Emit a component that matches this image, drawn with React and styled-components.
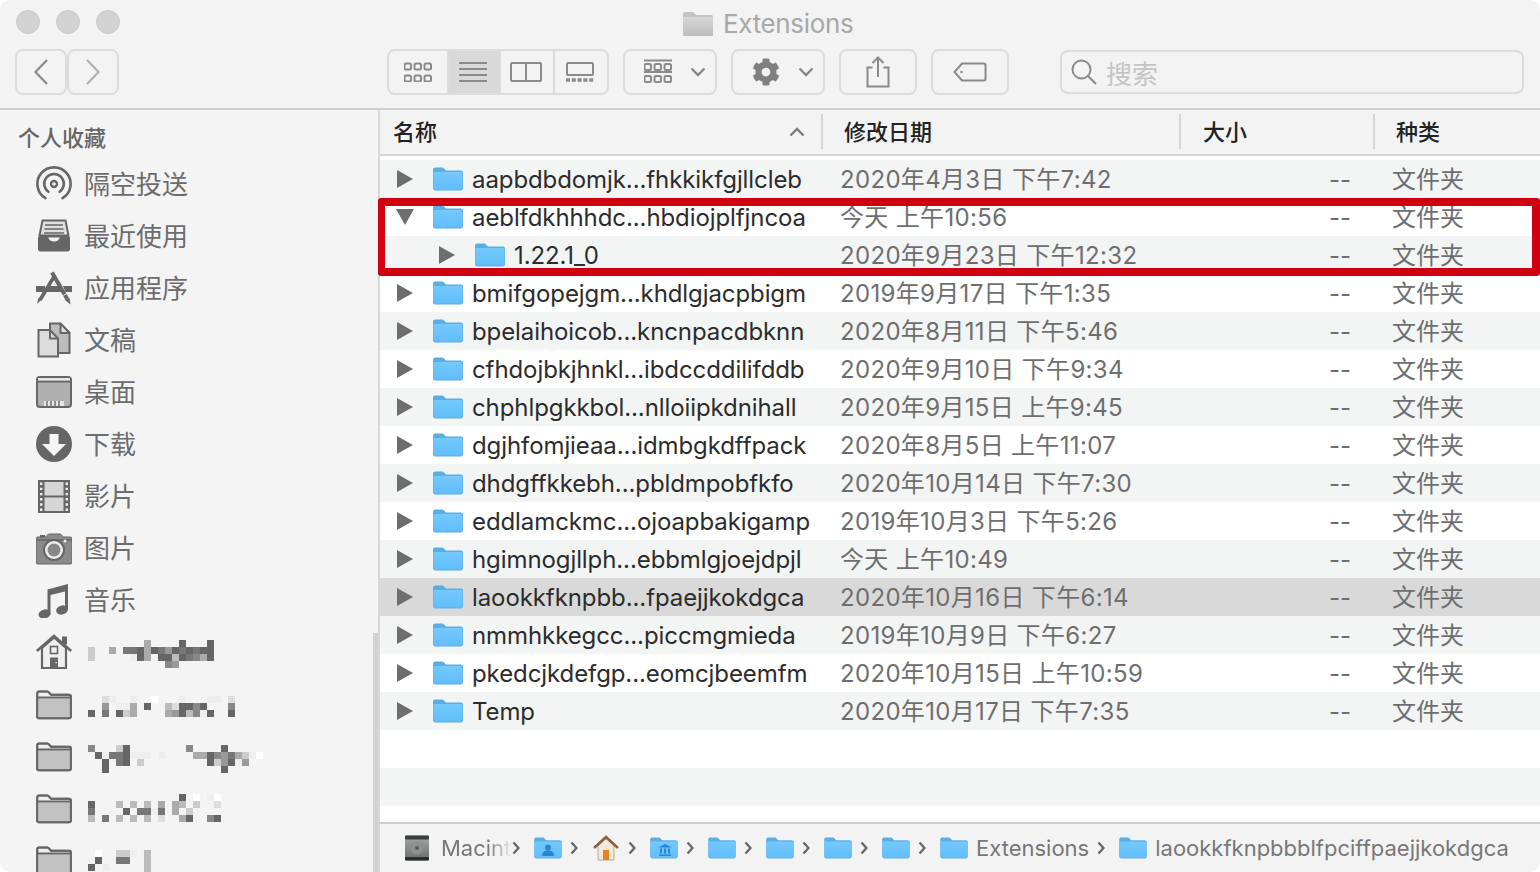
import styled, { createGlobalStyle } from "styled-components";
import { FaCog } from "react-icons/fa";

const GlobalStyle = createGlobalStyle`
  html, body {
    margin: 0;
    padding: 0;
    background: #fff;
  }
  body {
    width: 1540px;
    height: 872px;
    overflow: hidden;
    font-family: Inter, "Noto Sans CJK SC", sans-serif;
  }
`;

const rows = [
  { name: "aapbdbdomjk...fhkkikfgjllcleb", date: "2020年4月3日 下午7:42" },
  { name: "aeblfdkhhhdc...hbdiojplfjncoa", date: "今天 上午10:56", open: true },
  { name: "1.22.1_0", date: "2020年9月23日 下午12:32", level: 1 },
  { name: "bmifgopejgm...khdlgjacpbigm", date: "2019年9月17日 下午1:35" },
  { name: "bpelaihoicob...kncnpacdbknn", date: "2020年8月11日 下午5:46" },
  { name: "cfhdojbkjhnkl...ibdccddilifddb", date: "2020年9月10日 下午9:34" },
  { name: "chphlpgkkbol...nlloiipkdnihall", date: "2020年9月15日 上午9:45" },
  { name: "dgjhfomjieaa...idmbgkdffpack", date: "2020年8月5日 上午11:07" },
  { name: "dhdgffkkebh...pbldmpobfkfo", date: "2020年10月14日 下午7:30" },
  { name: "eddlamckmc...ojoapbakigamp", date: "2019年10月3日 下午5:26" },
  { name: "hgimnogjllph...ebbmlgjoejdpjl", date: "今天 上午10:49" },
  { name: "laookkfknpbb...fpaejjkokdgca", date: "2020年10月16日 下午6:14", selected: true },
  { name: "nmmhkkegcc...piccmgmieda", date: "2019年10月9日 下午6:27" },
  { name: "pkedcjkdefgp...eomcjbeemfm", date: "2020年10月15日 上午10:59" },
  { name: "Temp", date: "2020年10月17日 下午7:35" },
];

// pixelated names in the sidebar, one hex digit = grey level of a 7px cell
const mosaics = [
  {
    top: 14,
    cells: [
      "........a....6...6",
      "c..a.776a679676766",
      "c.....e6a.66b678a6",
      "...........89",
    ],
  },
  {
    top: 18,
    cells: [
      "..de..e..f...e...ee.d",
      "..9.eea.6..bd6686...8",
      "6.7.6ca....a96b8e6..6",
    ],
  },
  {
    top: 15,
    cells: [
      "8...c6........8....6",
      ".6e776eee.e....aa6897acef",
      "..6.76.c.........6c96e9",
      "..6................6",
    ],
  },
  {
    top: 12,
    cells: [
      ".............6.f.ef",
      "6...b.b.b.a.ab.c..d",
      "7....6.77e7.a.c",
      "b.7.b.b.b.d..a6..86",
    ],
  },
  {
    top: 16,
    cells: [".f..cce.b", ".6..77..b", "6.e.....b", "........b"],
  },
];

const Mosaic = ({ cells, top }) => (
  <MosaicSvg $top={top} width="180" height="28" viewBox="0 0 180 28">
    {cells.map((line, y) =>
      line.split("").map((c, x) =>
        c === "." ? null : (
          <rect
            key={x + "-" + y}
            x={x * 7}
            y={y * 7}
            width="7"
            height="7"
            fill={"#" + c + c + c + c + c + c}
          />
        )
      )
    )}
  </MosaicSvg>
);

const BlueFolder = ({ w = 30, h = 24 }) => (
  <svg width={w} height={h} viewBox="0 0 30 24">
    <defs>
      <linearGradient id="blueBody" x1="0" y1="0" x2="0" y2="1">
        <stop offset="0" stopColor="#74c9fd" />
        <stop offset="1" stopColor="#62bdfb" />
      </linearGradient>
    </defs>
    <path d="M0 2.500C0 1.200 1 .5 2 .5h7c1 0 1.500.4 2.200 1.200L13 3.500h15c1.200 0 2 .8 2 2V21c0 1.500-1 2.500-2.300 2.500H2.300C1 23.500 0 22.500 0 21z" fill="#5aaee6" />
    <path d="M.5 6.500C.5 5.600 1 5 1.800 5h26.400c.8 0 1.300.6 1.300 1.500V21c0 1-.6 1.600-1.500 1.600H2C1.100 22.600.5 22 .5 21z" fill="url(#blueBody)" />
  </svg>
);

const GreyFolder = () => (
  <svg width="30" height="24" viewBox="0 0 30 24">
    <defs>
      <linearGradient id="greyBody" x1="0" y1="0" x2="0" y2="1">
        <stop offset="0" stopColor="#d8d8d8" />
        <stop offset="1" stopColor="#bcbcbc" />
      </linearGradient>
    </defs>
    <path d="M0 1.500C0 .8.6 0 1.500 0h8c.8 0 1.300.4 1.800 1L13 3h15.500c.8 0 1.500.7 1.500 1.500v18c0 .8-.7 1.500-1.500 1.500h-27C.7 24 0 23.300 0 22.500z" fill="#c4c4c4" />
    <rect x="0" y="5" width="30" height="19" rx="1" fill="url(#greyBody)" />
  </svg>
);

const SideFolder = () => (
  <svg width="36" height="36" viewBox="0 0 36 36">
    <path d="M1.200 7.500c0-1.400.8-2 2-2h8c1 0 1.500.4 2.200 1.300L15 8.700h18c1.200 0 1.800.7 1.800 1.800v20c0 1.200-.7 1.800-1.800 1.800H3c-1.200 0-1.800-.7-1.800-1.800z" fill="#efefef" stroke="#666" strokeWidth="2" />
    <path d="M2.200 12.400h31.600v18.900H2.200z" fill="#c2c2c2" />
    <path d="M1.500 11.500h33" stroke="#666" strokeWidth="1.800" />
    <path d="M1.200 7.500c0-1.400.8-2 2-2h8c1 0 1.500.4 2.200 1.300L15 8.700h18c1.200 0 1.800.7 1.800 1.800v20c0 1.200-.7 1.800-1.800 1.800H3c-1.200 0-1.800-.7-1.800-1.800z" fill="none" stroke="#666" strokeWidth="2" />
  </svg>
);

const sideIcons = {
  airdrop: (
    <svg width="36" height="36" viewBox="0 0 36 36" fill="none" stroke="#666" strokeWidth="2.600" strokeLinecap="round">
      <path d="M9.500 32.200A16.600 16.600 0 1 1 26.500 32.200" />
      <path d="M12.400 25.800A9.800 9.800 0 1 1 23.600 25.800" />
      <circle cx="18" cy="18" r="3" strokeWidth="2.400" />
    </svg>
  ),
  recents: (
    <svg width="36" height="36" viewBox="0 0 36 36">
      <path d="M6.500 2.500h23l3 15H3.500z" fill="#e0e0e0" stroke="#666" strokeWidth="2" />
      <path d="M9 7h18M8.500 11h19M8 15h20" stroke="#666" strokeWidth="1.600" />
      <path d="M2 19h10c1 3 3 4.500 6 4.500s5-1.500 6-4.500h10v12c0 1.400-1 2.400-2.400 2.400H4.400C3 33.400 2 32.400 2 31z" fill="#666" />
      <path d="M3 18h30v1.500H3z" fill="#666" />
    </svg>
  ),
  apps: (
    <svg width="36" height="36" viewBox="0 0 36 36">
      <path d="M0 16h9v2.500l-2 3.500H0zM13 16h10l3 6H10zM27 16h9v6h-6.500z" fill="#666" />
      <path d="M17.500 7.500L4 30" stroke="#666" strokeWidth="3.600" />
      <path d="M5.800 29.200L1 34l1.400-6z" fill="#666" />
      <path d="M16 2.500l15 26" stroke="#666" strokeWidth="4" />
      <path d="M28.500 29.500l6 5-1-6.800z" fill="#666" />
      <path d="M27.500 25.500l3.400-2" stroke="#f4f4f4" strokeWidth="1" />
    </svg>
  ),
  docs: (
    <svg width="36" height="36" viewBox="0 0 36 36">
      <path d="M14 1.500h10.500L33.500 11v20H14z" fill="#bdbdbd" stroke="#666" strokeWidth="2" />
      <path d="M24.500 1.500V11h9z" fill="#e4e4e4" stroke="#666" strokeWidth="2" strokeLinejoin="round" />
      <path d="M2.500 8h11.500l8 8.500v18H2.500z" fill="#dcdcdc" stroke="#666" strokeWidth="2" />
      <path d="M14 8v8.500h8" fill="none" stroke="#666" strokeWidth="2" />
    </svg>
  ),
  desktop: (
    <svg width="36" height="36" viewBox="0 0 36 36">
      <rect x="1" y="3" width="34" height="30" rx="3" fill="#b0b0b0" stroke="#666" strokeWidth="2" />
      <path d="M1 7.500h34" stroke="#666" strokeWidth="2" />
      <path d="M2 4h32v2.500H2z" fill="#e6e6e6" />
      <rect x="8" y="27" width="20" height="5" fill="#e6e6e6" />
      <path d="M11 27v5M15 27v5M19 27v5M23 27v5" stroke="#666" strokeWidth="1.400" />
    </svg>
  ),
  downloads: (
    <svg width="36" height="36" viewBox="0 0 36 36">
      <circle cx="18" cy="18" r="18" fill="#666" />
      <path d="M13.500 8h9v10H30L18 30 6 18h7.500z" fill="#f4f4f4" />
    </svg>
  ),
  movies: (
    <svg width="36" height="36" viewBox="0 0 36 36">
      <rect x="2" y="2" width="32" height="33" fill="#666" />
      <rect x="8.500" y="4" width="19" height="13.500" fill="#d6d6d6" />
      <rect x="8.500" y="19.500" width="19" height="13.500" fill="#d6d6d6" />
      <path d="M5.200 4.500v29M30.800 4.500v29" stroke="#efefef" strokeWidth="2.400" strokeDasharray="2.400 2.800" />
    </svg>
  ),
  photos: (
    <svg width="36" height="36" viewBox="0 0 36 36">
      <path d="M4 5h5v2H4z" fill="#666" />
      <path d="M1.500 7h8l3-3h12l3 3h7c.8 0 1.500.7 1.500 1.500v24c0 .8-.7 1.500-1.500 1.500h-33C.7 34 0 33.300 0 32.500v-24C0 7.700.7 7 1.500 7z" fill="#8a8a8a" stroke="#666" strokeWidth="1" />
      <path d="M0 10h36" stroke="#666" strokeWidth="1.500" />
      <circle cx="18" cy="20" r="11" fill="#666" />
      <circle cx="18" cy="20" r="9" fill="#eee" />
      <circle cx="18" cy="20" r="6.500" fill="#888" />
      <circle cx="29" cy="11" r="1.500" fill="#eee" />
    </svg>
  ),
  music: (
    <svg width="36" height="36" viewBox="0 0 36 36">
      <path d="M11.500 7.500L32 2v25h-3V9.500L14.500 13v20h-3z" fill="#666" />
      <ellipse cx="8.500" cy="32" rx="6" ry="4.500" transform="rotate(-15 8.500 32)" fill="#666" />
      <ellipse cx="26" cy="28" rx="6" ry="4.500" transform="rotate(-15 26 28)" fill="#666" />
    </svg>
  ),
  home: (
    <svg width="36" height="36" viewBox="0 0 36 36">
      <path d="M6 14L18 3.500 30 14v20H6z" fill="#efefef" stroke="#666" strokeWidth="2.200" />
      <path d="M0.800 17L18 2l17.200 15" fill="none" stroke="#666" strokeWidth="2.600" />
      <rect x="26" y="2.500" width="5" height="8" fill="#666" />
      <rect x="14.500" y="12.500" width="7" height="7" fill="#efefef" stroke="#666" strokeWidth="1.600" />
      <rect x="14" y="23.500" width="8" height="10.500" fill="#666" />
      <rect x="19.500" y="28" width="1.300" height="1.300" fill="#efefef" />
    </svg>
  ),
};

const ToolIcon = ({ children, w = 32, h = 24 }) => (
  <svg width={w} height={h} viewBox={`0 0 ${w} ${h}`} fill="none" stroke="#8a8a8a" strokeWidth="2">
    {children}
  </svg>
);

const GridCells = ({ x = 1, y = 0 }) => (
  <>
    {[0, 10, 20].map((dx) =>
      [0, 12].map((dy) => (
        <rect key={dx + "-" + dy} x={x + dx} y={y + dy} width="6.500" height="6" rx="1.500" />
      ))
    )}
  </>
);

const Chevron = () => (
  <ChevronSvg width="8" height="14" viewBox="0 0 8 14">
    <path d="M1.500 1.500L6.500 7l-5 5.500" fill="none" stroke="#666" strokeWidth="2.300" />
  </ChevronSvg>
);

const DropArrow = () => (
  <svg width="16" height="10" viewBox="0 0 16 10">
    <path d="M1.500 1.500L8 8l6.500-6.500" fill="none" stroke="#868686" strokeWidth="2.400" />
  </svg>
);

const sidebarItems = [
  ["airdrop", "隔空投送"],
  ["recents", "最近使用"],
  ["apps", "应用程序"],
  ["docs", "文稿"],
  ["desktop", "桌面"],
  ["downloads", "下载"],
  ["movies", "影片"],
  ["photos", "图片"],
  ["music", "音乐"],
];

const App = () => {
  return (
    <Window>
      <GlobalStyle />
      <Toolbar>
        <TitleRow>
          <GreyFolder />
          <Title>Extensions</Title>
        </TitleRow>
        <Lights>
          <Light />
          <Light />
          <Light />
        </Lights>
        <Tools>
          <NavGroup>
            <NavButton>
              <svg width="16" height="28" viewBox="0 0 16 28">
                <path d="M14 2L2.500 14 14 26" fill="none" stroke="#8a8a8a" strokeWidth="2.200" />
              </svg>
            </NavButton>
            <NavButton>
              <svg width="16" height="28" viewBox="0 0 16 28">
                <path d="M2 2l11.500 12L2 26" fill="none" stroke="#b0b0b0" strokeWidth="2.200" />
              </svg>
            </NavButton>
          </NavGroup>
          <Segments>
            <Segment $w={58}>
              <ToolIcon w={28} h={20}>
                <GridCells x={.5} y={1.500} />
              </ToolIcon>
            </Segment>
            <Segment $w={52} $active>
              <ToolIcon w={28} h={22}>
                <path d="M0 2h28M0 8h28M0 14h28M0 20h28" />
              </ToolIcon>
            </Segment>
            <Segment $w={54}>
              <ToolIcon h={20}>
                <rect x="1" y="1" width="30" height="18" rx="1" />
                <path d="M16 1v18" />
              </ToolIcon>
            </Segment>
            <Segment $w={54}>
              <ToolIcon w={28} h={20}>
                <rect x="1" y="1" width="26" height="12" rx="1" />
                <path d="M0 18h28" strokeWidth="3.500" strokeDasharray="4 1.800" />
              </ToolIcon>
            </Segment>
          </Segments>
          <ToolButton $w={94} $gap={18} $pad={19}>
            <ToolIcon w={28} h={26}>
              <path d="M0 1.500h28M0 13h28" />
              <GridCells x={.5} y={5} />
            </ToolIcon>
            <DropArrow />
          </ToolButton>
          <ToolButton $w={94} $gap={18} $pad={19}>
            <Gear />
            <DropArrow />
          </ToolButton>
          <ToolButton $w={78}>
            <ToolIcon w={24} h={32}>
              <path d="M6.500 11.500H1.500v19h21v-19h-5" />
              <path d="M12 21V2M6.500 7L12 1.500 17.500 7" />
            </ToolIcon>
          </ToolButton>
          <ToolButton $w={78}>
            <ToolIcon w={34} h={20}>
              <path d="M9 1.500h22c1 0 1.500.5 1.500 1.500v14c0 1-.5 1.500-1.500 1.500H9L1.500 10z" />
              <circle cx="8.500" cy="10" r="1.300" fill="#8a8a8a" stroke="none" />
            </ToolIcon>
          </ToolButton>
          <Search>
            <svg width="26" height="26" viewBox="0 0 26 26" fill="none" stroke="#8a8a8a" strokeWidth="2">
              <circle cx="10.500" cy="10.500" r="9" />
              <path d="M17 17l8 8" />
            </svg>
            <SearchText>搜索</SearchText>
          </Search>
        </Tools>
      </Toolbar>

      <Body>
        <Sidebar>
          <SideHeading>个人收藏</SideHeading>
          {sidebarItems.map(([icon, label]) => (
            <SideRow key={icon}>
              <SideIcon>{sideIcons[icon]}</SideIcon>
              <SideLabel>{label}</SideLabel>
            </SideRow>
          ))}
          {mosaics.map((m, i) => (
            <SideRow key={i}>
              <SideIcon>{i === 0 ? sideIcons.home : <SideFolder />}</SideIcon>
              <Mosaic cells={m.cells} top={m.top} />
            </SideRow>
          ))}
          <SideScroll />
        </Sidebar>

        <Main>
          <Header>
            <HeadCell $w={441} $pad={13}>
              名称
              <SortArrow width="16" height="10" viewBox="0 0 16 10">
                <path d="M1.500 8.500L8 2l6.500 6.500" fill="none" stroke="#7c7c7c" strokeWidth="2.400" />
              </SortArrow>
            </HeadCell>
            <HeadCell $w={358} $pad={21} $line>
              修改日期
            </HeadCell>
            <HeadCell $w={194} $pad={22} $line>
              大小
            </HeadCell>
            <HeadCell $w={167} $pad={21} $line>
              种类
            </HeadCell>
          </Header>

          <List>
            {rows.map((r, i) => (
              <Row key={r.name} $odd={i % 2 === 0} $selected={r.selected}>
                <NameCell $level={r.level || 0}>
                  <Arrow $open={r.open} width="16" height="18" viewBox="0 0 16 18">
                    <path d="M0 0l16 9-16 9z" fill="#6e6e6e" />
                  </Arrow>
                  <BlueFolder />
                  <Name>{r.name}</Name>
                </NameCell>
                <DateCell>{r.date}</DateCell>
                <SizeCell>--</SizeCell>
                <KindCell>文件夹</KindCell>
              </Row>
            ))}
            <Row />
            <Row $odd />
            <Highlight />
          </List>

          <PathBar>
            <Crumb>
              <svg width="26" height="26" viewBox="0 0 26 26">
                <defs>
                  <linearGradient id="hdd" x1="0" y1="0" x2="0" y2="1">
                    <stop offset="0" stopColor="#a4a8a8" />
                    <stop offset="1" stopColor="#6a6d6d" />
                  </linearGradient>
                </defs>
                <rect x="1" y="0.500" width="24" height="25" rx="2" fill="url(#hdd)" />
                <rect x="1" y="0.500" width="24" height="4" rx="1" fill="#3c3e3e" />
                <rect x="1" y="22" width="24" height="3.500" rx="1" fill="#2c2e2e" />
                <circle cx="13" cy="13" r="6.500" fill="#8f9191" />
                <circle cx="13" cy="13" r="2" fill="#5a5c5c" />
              </svg>
              <MacText>Macint</MacText>
              <Chevron />
            </Crumb>
            <Crumb>
              <BadgedFolder>
                <BlueFolder w={28} h={22} />
                <svg width="12" height="12" viewBox="0 0 12 12">
                  <circle cx="6" cy="3.500" r="3" fill="#2a86cf" />
                  <path d="M0 12c0-4 2-5.500 6-5.500S12 8 12 12z" fill="#2a86cf" />
                </svg>
              </BadgedFolder>
              <Chevron />
            </Crumb>
            <Crumb>
              <svg width="28" height="26" viewBox="0 0 28 26">
                <path d="M6 11L14 3.500 22 11v14H6z" fill="#f3e9dc" stroke="#b7a78e" strokeWidth="1" />
                <path d="M2 13L14 2l12 11" fill="none" stroke="#8a5f3a" strokeWidth="2.400" />
                <rect x="11" y="15" width="6" height="10" fill="#e8821e" />
              </svg>
              <Chevron />
            </Crumb>
            <Crumb>
              <BadgedFolder>
                <BlueFolder w={28} h={22} />
                <svg width="14" height="12" viewBox="0 0 14 12">
                  <path d="M7 0l7 3.500H0zM1 10.500h12V12H1zM2 4.500h2v5H2zM6 4.500h2v5H6zM10 4.500h2v5h-2z" fill="#2a86cf" />
                </svg>
              </BadgedFolder>
              <Chevron />
            </Crumb>
            {[0, 1, 2, 3].map((n) => (
              <Crumb key={n}>
                <BlueFolder w={28} h={22} />
                <Chevron />
              </Crumb>
            ))}
            <Crumb>
              <BlueFolder w={28} h={22} />
              <PathText>Extensions</PathText>
              <Chevron />
            </Crumb>
            <Crumb>
              <BlueFolder w={28} h={22} />
              <PathText>laookkfknpbbblfpciffpaejjkokdgca</PathText>
            </Crumb>
          </PathBar>
        </Main>
      </Body>
    </Window>
  );
};

const Window = styled.div`
  width: 1540px;
  height: 872px;
  border-radius: 10px;
  overflow: hidden;
  display: flex;
  flex-direction: column;
  background: #fff;
`;

const Toolbar = styled.div`
  height: 110px;
  flex: none;
  box-sizing: border-box;
  background: #f3f3f3;
  border-bottom: 2px solid #cfcfcf;
  position: relative;
`;

const TitleRow = styled.div`
  height: 49px;
  padding-left: 683px;
  padding-bottom: 2px;
  box-sizing: border-box;
  display: flex;
  align-items: center;
  gap: 10px;
`;

const Title = styled.span`
  font-size: 26px;
  letter-spacing: -0.35px;
  color: #a8a8a8;
`;

const Lights = styled.div`
  position: absolute;
  left: 16px;
  top: 10px;
  display: flex;
  gap: 16px;
`;

const Light = styled.span`
  width: 24px;
  height: 24px;
  box-sizing: border-box;
  border-radius: 50%;
  background: #d2d2d2;
  border: 1px solid #c8c8c8;
`;

const Tools = styled.div`
  display: flex;
  align-items: center;
  height: 46px;
  padding-left: 15px;
`;

const NavGroup = styled.div`
  display: flex;
  margin-right: 268px;
`;

const NavButton = styled.div`
  width: 52px;
  height: 46px;
  box-sizing: border-box;
  border: 2px solid #dcdcdc;
  border-radius: 8px;
  display: flex;
  align-items: center;
  justify-content: center;
`;

const Segments = styled.div`
  display: flex;
  height: 46px;
  box-sizing: border-box;
  border: 2px solid #dcdcdc;
  border-radius: 8px;
  overflow: hidden;
  margin-right: 14px;
`;

const Segment = styled.div`
  width: ${(p) => p.$w}px;
  display: flex;
  align-items: center;
  justify-content: center;
  box-sizing: border-box;
  background: ${(p) => (p.$active ? "#d9d9d9" : "transparent")};
  & + & {
    border-left: 2px solid ${(p) => (p.$active ? "#d9d9d9" : "#dcdcdc")};
    padding-right: 2px;
  }
`;

const ToolButton = styled.div`
  width: ${(p) => p.$w}px;
  height: 46px;
  box-sizing: border-box;
  border: 2px solid #dcdcdc;
  border-radius: 8px;
  margin-right: 14px;
  display: flex;
  align-items: center;
  justify-content: ${(p) => (p.$pad ? "flex-start" : "center")};
  padding-left: ${(p) => p.$pad || 0}px;
  gap: ${(p) => p.$gap || 0}px;
`;

const Gear = styled(FaCog)`
  width: 28px;
  height: 28px;
  color: #808080;
`;

const Search = styled.div`
  width: 464px;
  height: 44px;
  margin-left: 37px;
  box-sizing: border-box;
  border: 2px solid #dcdcdc;
  border-radius: 8px;
  display: flex;
  align-items: center;
  padding-left: 9px;
  gap: 9px;
`;

const SearchText = styled.span`
  font-size: 26px;
  color: #c4c4c4;
`;

const Body = styled.div`
  flex: 1;
  display: flex;
  min-height: 0;
`;

const Sidebar = styled.div`
  width: 380px;
  flex: none;
  box-sizing: border-box;
  background: #f4f4f4;
  border-right: 2px solid #d8d8d8;
  position: relative;
  overflow: hidden;
`;

const SideHeading = styled.div`
  height: 48px;
  padding: 13px 0 0 18px;
  box-sizing: border-box;
  font-size: 22px;
  line-height: 30px;
  font-weight: 500;
  color: #666;
`;

const SideRow = styled.div`
  height: 52px;
  flex: none;
  display: flex;
  align-items: center;
  padding-left: 36px;
`;

const SideIcon = styled.div`
  width: 36px;
  height: 36px;
  flex: none;
  margin-right: 13px;
  svg {
    display: block;
  }
`;

const SideLabel = styled.span`
  font-size: 26px;
  margin: 0 0 3px -1px;
  color: #6c6c6c;
`;

const MosaicSvg = styled.svg`
  flex: none;
  margin-left: 3px;
  align-self: flex-start;
  margin-top: ${(p) => p.$top}px;
`;

const SideScroll = styled.div`
  position: absolute;
  right: 0;
  top: 523px;
  bottom: 0;
  width: 5px;
  background: #d2d2d2;
`;

const Main = styled.div`
  flex: 1;
  min-width: 0;
  display: flex;
  flex-direction: column;
`;

const Header = styled.div`
  height: 46px;
  flex: none;
  box-sizing: border-box;
  display: flex;
  align-items: stretch;
  padding: 4px 0 5px;
  background: #f3f3f3;
  border-bottom: 2px solid #d6d6d6;
`;

const HeadCell = styled.div`
  width: ${(p) => p.$w}px;
  flex: none;
  box-sizing: border-box;
  padding-left: ${(p) => p.$pad}px;
  padding-bottom: 4px;
  display: flex;
  align-items: center;
  justify-content: space-between;
  font-size: 22px;
  font-weight: 500;
  color: #222;
  border-left: ${(p) => (p.$line ? "2px solid #d6d6d6" : "none")};
`;

const SortArrow = styled.svg`
  margin: 4px 16px 0 0;
`;

const List = styled.div`
  flex: 1;
  min-height: 0;
  padding-top: 4px;
  background: #fff;
  position: relative;
`;

const Row = styled.div`
  height: 38px;
  display: grid;
  grid-template-columns: 460px 440px 71px 1fr;
  align-items: center;
  background: ${(p) =>
    p.$selected ? "#d9d9d9" : p.$odd ? "#f3f4f4" : "#fff"};
`;

const NameCell = styled.div`
  display: flex;
  align-items: center;
  padding-left: ${(p) => 17 + p.$level * 42}px;
`;

const Arrow = styled.svg`
  flex: none;
  margin-right: 20px;
  transform: ${(p) => (p.$open ? "rotate(90deg)" : "none")};
`;

const Name = styled.span`
  margin-left: 9px;
  font-size: 24px;
  letter-spacing: -0.09px;
  color: #2c2c2c;
  white-space: nowrap;
`;

const DateCell = styled.span`
  font-size: 24px;
  letter-spacing: 0.33px;
  margin-bottom: 3px;
  color: #6e6e6e;
  white-space: nowrap;
`;

const SizeCell = styled.span`
  font-size: 24px;
  color: #6e6e6e;
  text-align: right;
`;

const KindCell = styled.span`
  font-size: 24px;
  margin-bottom: 3px;
  padding-left: 41px;
  color: #6e6e6e;
`;

const Highlight = styled.div`
  position: absolute;
  left: -2px;
  right: 0;
  top: 42px;
  height: 78px;
  box-sizing: border-box;
  border: 8px solid #cf0010;
  border-left-width: 7px;
  border-radius: 3px;
`;

const PathBar = styled.div`
  height: 50px;
  flex: none;
  box-sizing: border-box;
  background: #f3f3f3;
  border-top: 2px solid #cfcfcf;
  display: flex;
  align-items: center;
  gap: 14px;
  padding-left: 24px;
`;

const Crumb = styled.div`
  display: flex;
  align-items: center;
  gap: 8px;
`;

const ChevronSvg = styled.svg`
  flex: none;
`;

const MacText = styled.span`
  width: 71px;
  margin: 0 -8px 0 3px;
  overflow: hidden;
  font-size: 22px;
  color: #777;
  white-space: nowrap;
  -webkit-mask-image: linear-gradient(to right, #000 65%, transparent 100%);
  mask-image: linear-gradient(to right, #000 65%, transparent 100%);
`;

const PathText = styled.span`
  font-size: 22px;
  color: #777;
  white-space: nowrap;
`;

const BadgedFolder = styled.div`
  position: relative;
  width: 28px;
  height: 22px;
  & > svg:last-child {
    position: absolute;
    left: 8px;
    top: 7px;
  }
`;

export default App;
